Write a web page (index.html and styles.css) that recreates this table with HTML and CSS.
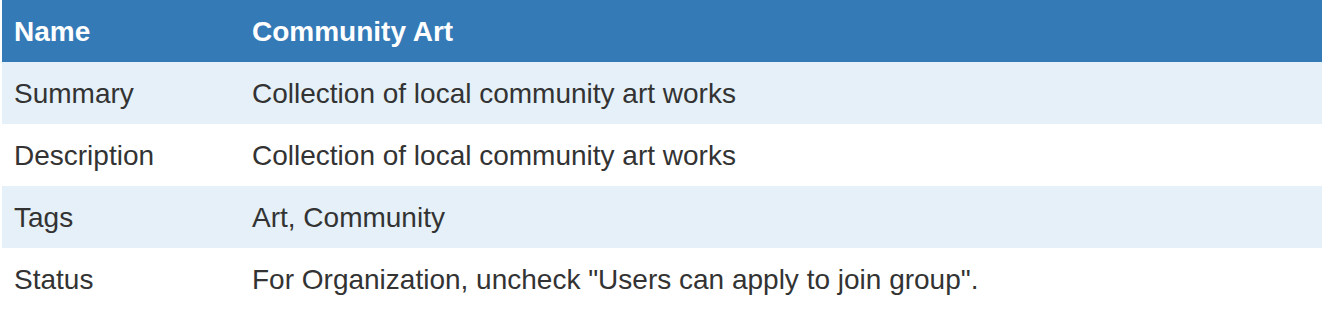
FILE: index.html
```html
<!DOCTYPE html>
<html>
<head>
<meta charset="utf-8">
<link rel="stylesheet" href="styles.css">
</head>
<body>
<table class="info">
  <thead>
    <tr class="head-row"><th class="key">Name</th><th class="val">Community Art</th></tr>
  </thead>
  <tbody>
    <tr class="row shaded"><td class="key">Summary</td><td class="val">Collection of local community art works</td></tr>
    <tr class="row"><td class="key">Description</td><td class="val">Collection of local community art works</td></tr>
    <tr class="row shaded"><td class="key">Tags</td><td class="val">Art, Community</td></tr>
    <tr class="row"><td class="key">Status</td><td class="val">For Organization, uncheck "Users can apply to join group".</td></tr>
  </tbody>
</table>
</body>
</html>
```
FILE: styles.css
```css
html, body {
  margin: 0;
  padding: 0;
  background: #ffffff;
}
body {
  padding: 0 2px;
  font-family: "Liberation Sans", Arial, Helvetica, sans-serif;
  font-size: 28px;
  color: #333333;
}
.info {
  width: 1320px;
  border-collapse: collapse;
  border-spacing: 0;
  table-layout: fixed;
}
.info th, .info td {
  height: 62px;
  box-sizing: border-box;
  padding: 12px 12px 10px 12px;
  line-height: 40px;
  text-align: left;
  vertical-align: top;
  white-space: nowrap;
}
.info .key {
  width: 238px;
}
.head-row {
  background: #337ab7;
  color: #ffffff;
}
.head-row th {
  font-weight: bold;
}
.row td {
  font-weight: normal;
}
.shaded {
  background: #e5f0f8;
}
```
